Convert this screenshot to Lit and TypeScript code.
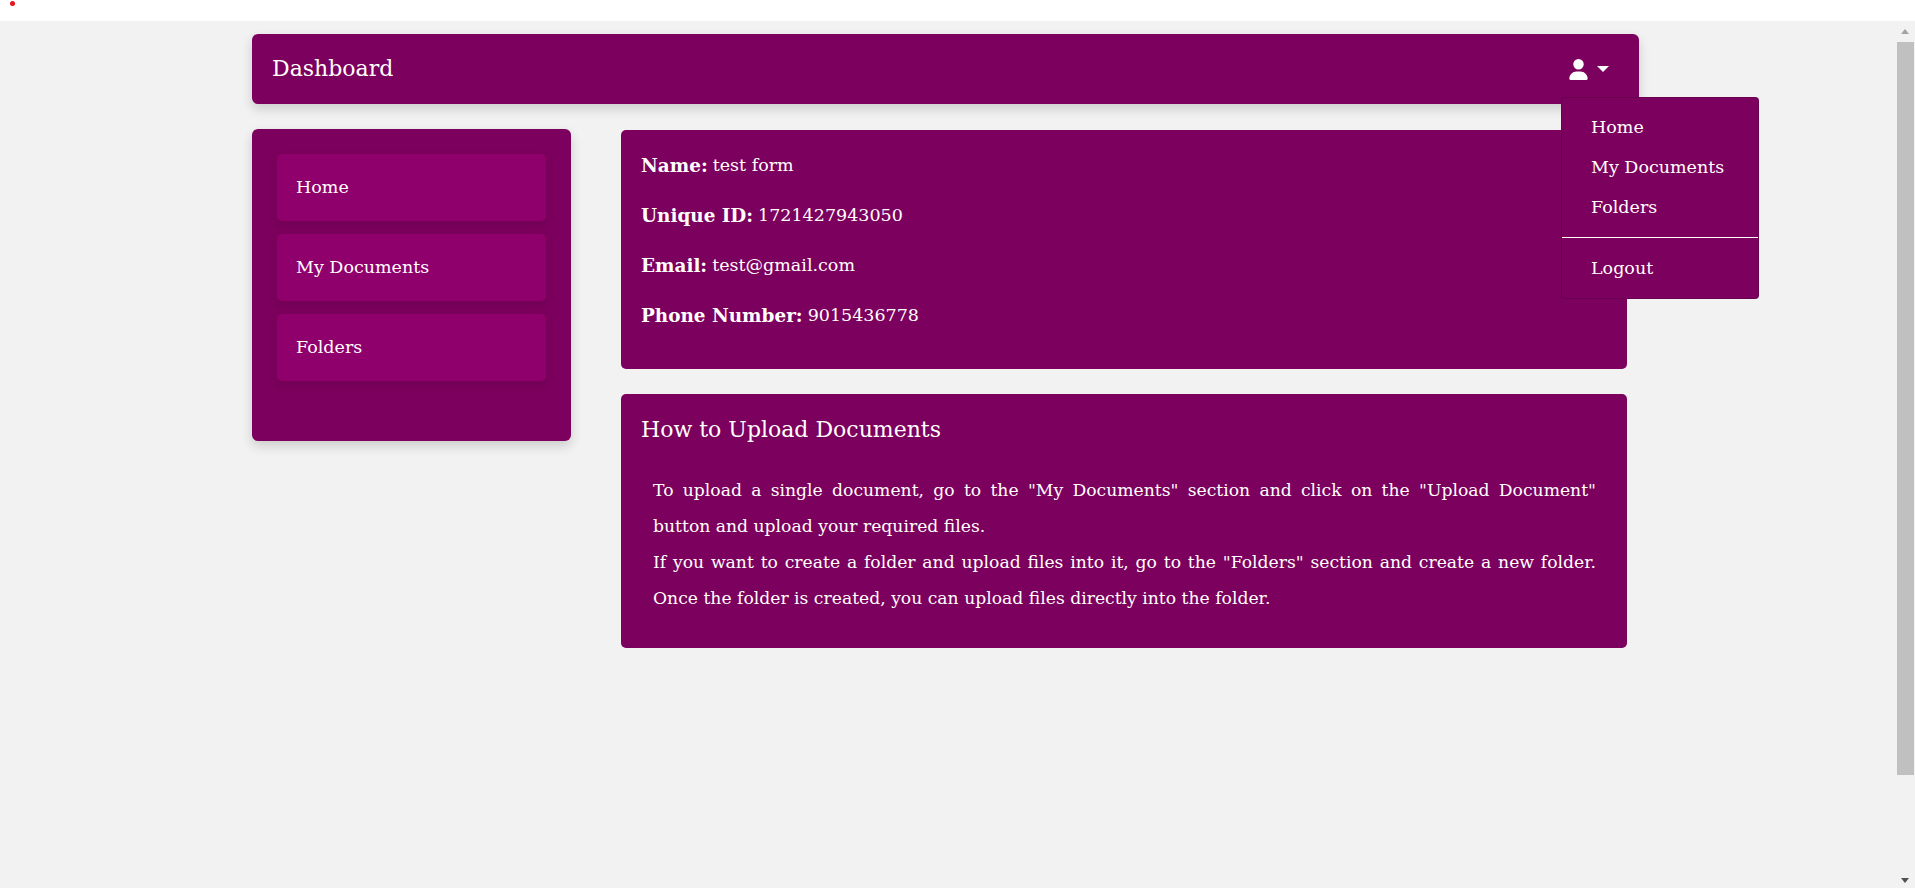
import { LitElement, html, css } from "lit";
import { customElement } from "lit/decorators.js";

const NAV = ["Home", "My Documents", "Folders"];
const INFO: [string, string][] = [
  ["Name:", "test form"],
  ["Unique ID:", "1721427943050"],
  ["Email:", "test@gmail.com"],
  ["Phone Number:", "9015436778"],
];

@customElement("app-root")
export class AppRoot extends LitElement {
  static styles = css`
    :host {
      display: block;
      height: 888px;
      background: #f2f2f2;
      color: #fff;
      font-family: "DejaVu Serif", serif;
      font-size: 17.5px;
      overflow: hidden;
      position: relative;
    }
    .topbar { height: 21px; background: #fff; position: relative; }
    .dot { position: absolute; left: 10px; top: 1px; width: 5px; height: 5px; border-radius: 50%; background: #e8141c; }
    .page { padding: 13px 0 0 252px; width: 1387px; }
    .header {
      position: relative;
      height: 70px;
      background: #7c005d;
      border-radius: 6px;
      box-shadow: 0 5px 12px rgba(0, 0, 0, 0.16);
      display: flex;
      align-items: center;
      justify-content: space-between;
      padding: 0 30px 0 20px;
    }
    .title { font-size: 22px; padding-bottom: 1px; }
    .toggle { display: flex; align-items: center; gap: 9px; }
    .toggle svg { width: 19px; height: 21px; fill: #fff; display: block; }
    .caret { width: 0; height: 0; border: 6px solid transparent; border-top-color: #fff; border-bottom: 0; }
    .menu {
      position: absolute;
      top: 63px;
      right: -120px;
      width: 198px;
      box-sizing: border-box;
      padding: 9px 0 10px;
      background: #7c005d;
      border: 1px solid rgba(0, 0, 0, 0.15);
      border-radius: 4px;
      z-index: 2;
    }
    .menu a { display: flex; align-items: center; height: 40px; padding: 0 0 1px 29px; box-sizing: border-box; }
    .menu hr { border: 0; border-top: 1px solid #fff; margin: 10px 0; }
    .row { display: flex; align-items: flex-start; gap: 50px; margin-top: 25px; }
    .side {
      width: 319px;
      height: 312px;
      box-sizing: border-box;
      padding: 25px;
      background: #7c005d;
      border-radius: 6px;
      box-shadow: 0 5px 12px rgba(0, 0, 0, 0.16);
      display: flex;
      flex-direction: column;
      gap: 13px;
    }
    .item {
      height: 67px;
      box-sizing: border-box;
      display: flex;
      align-items: center;
      padding: 0 0 1px 19px;
      background: #8f006d;
      border-radius: 5px;
      box-shadow: 0 4px 10px rgba(0, 0, 0, 0.1);
    }
    .main { width: 1006px; margin-top: 1px; display: flex; flex-direction: column; gap: 25px; }
    .card { background: #7c005d; border-radius: 5px; padding: 0 20px; }
    .info { height: 239px; padding-top: 10px; box-sizing: border-box; }
    .info p { margin: 0; height: 50px; display: flex; align-items: center; gap: 5px; }
    .info b { font-weight: 700; font-size: 18.4px; }
    .how { height: 254px; box-sizing: border-box; padding-top: 17px; }
    .how h2 { margin: 0; font-weight: 400; font-size: 22px; line-height: 38px; }
    .how p { margin: 23px 11px 0 12px; font-size: 17.2px; line-height: 36px; text-align: justify; }
    .scroll { position: absolute; top: 21px; right: 0; bottom: 0; width: 18px; background: #f2f2f2; }
    .thumb { position: absolute; top: 21px; left: 0; width: 17px; height: 733px; background: #c0c0c0; }
    .up, .down { position: absolute; left: 4px; width: 0; height: 0; border-left: 4.5px solid transparent; border-right: 4.5px solid transparent; }
    .up { top: 8px; border-bottom: 5px solid #a3a3a3; }
    .down { bottom: 5px; border-top: 5px solid #505050; }
  `;

  render() {
    return html`
      <div class="topbar"><span class="dot"></span></div>
      <div class="page">
        <header class="header">
          <div class="title">Dashboard</div>
          <div class="toggle">
            <svg viewBox="0 0 448 512"><path d="M224 256A128 128 0 1 0 224 0a128 128 0 1 0 0 256zm-45.7 48C79.8 304 0 383.8 0 482.3C0 498.7 13.3 512 29.7 512H418.3c16.4 0 29.7-13.3 29.7-29.7C448 383.8 368.2 304 269.7 304H178.3z"/></svg>
            <span class="caret"></span>
          </div>
          <nav class="menu">
            ${NAV.map((n) => html`<a>${n}</a>`)}
            <hr />
            <a>Logout</a>
          </nav>
        </header>
        <div class="row">
          <aside class="side">
            ${NAV.map((n) => html`<div class="item">${n}</div>`)}
          </aside>
          <main class="main">
            <section class="card info">
              ${INFO.map(([k, v]) => html`<p><b>${k}</b><span>${v}</span></p>`)}
            </section>
            <section class="card how">
              <h2>How to Upload Documents</h2>
              <p>To upload a single document, go to the "My Documents" section and click on the "Upload Document" button and upload your required files.<br />If you want to create a folder and upload files into it, go to the "Folders" section and create a new folder. Once the folder is created, you can upload files directly into the folder.</p>
            </section>
          </main>
        </div>
      </div>
      <div class="scroll"><span class="up"></span><span class="thumb"></span><span class="down"></span></div>
    `;
  }
}
